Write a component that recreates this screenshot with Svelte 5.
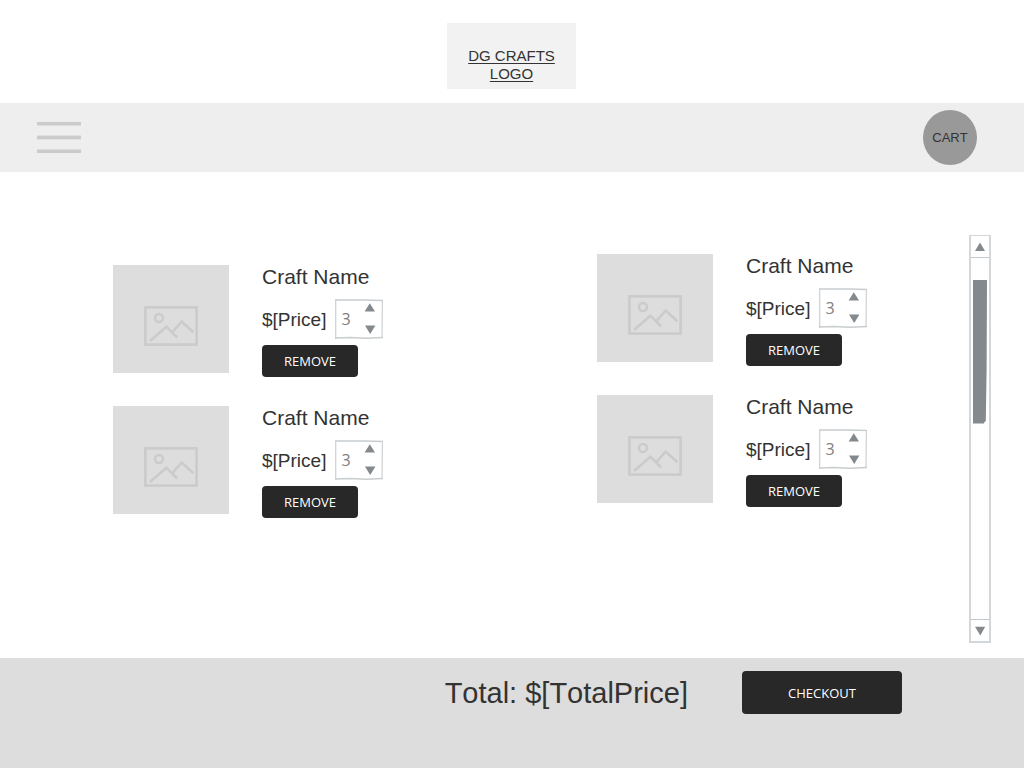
<script>
  let columns = $state([
    [{ id: 'a1', qty: 3 }, { id: 'a2', qty: 3 }],
    [{ id: 'b1', qty: 3 }, { id: 'b2', qty: 3 }],
  ]);

  function remove(col, id) {
    columns[col] = columns[col].filter((item) => item.id !== id);
  }
</script>

<div class="page">
  <header>
    <a class="logo" href="#home">DG CRAFTS LOGO</a>
  </header>

  <nav>
    <button class="menu" aria-label="Menu">
      <svg width="44" height="32" viewBox="0 0 44 32" fill="#cbcbcb">
        <rect y="0" width="44" height="3.5" />
        <rect y="13.6" width="44" height="3.8" />
        <rect y="27.5" width="44" height="3.5" />
      </svg>
    </button>
    <a class="cart" href="#cart">CART</a>
  </nav>

  <main>
    <div class="columns">
      {#each columns as items, c}
        <div class="column">
          {#each items as item (item.id)}
            <article>
              <div class="photo">
                <svg width="54" height="40" viewBox="0 0 54 40" fill="none" stroke="#cbcbcb" stroke-width="2.6">
                  <rect x="1.4" y="1.4" width="51.2" height="37.2" />
                  <circle cx="15" cy="12" r="4" stroke-width="2.4" />
                  <path d="M6 35 22.3 20.7 33.2 31.5M28.2 26.3 37.7 15.5 49.4 26.3" />
                </svg>
              </div>
              <div class="info">
                <h2>Craft Name</h2>
                <div class="row">
                  <span class="price">$[Price]</span>
                  <div class="stepper">
                    <svg class="frame" width="48" height="40" viewBox="0 0 48 40" fill="none">
                      <path d="M0 1 H30 L48 1.4" stroke="#c9cdcf" stroke-width="1.5" />
                      <path d="M.7 0V40" stroke="#ced3d6" stroke-width="1.3" />
                      <path d="M47.4 1 47 39" stroke="#cdd1d3" stroke-width="1.2" />
                      <path d="M0 39 15 38.6 31 39.2 48 38.6" stroke="#c9cdcf" stroke-width="1.5" />
                    </svg>
                    <input type="number" min="1" aria-label="Quantity" bind:value={item.qty} />
                    <div class="arrows">
                      <button aria-label="Increase quantity" onclick={() => item.qty++}>
                        <svg width="12" height="10" viewBox="0 0 12 10"><path d="M5.8 .2 11 8.6H.6Z" fill="#83898d" /></svg>
                      </button>
                      <button aria-label="Decrease quantity" onclick={() => (item.qty = Math.max(1, item.qty - 1))}>
                        <svg width="12" height="10" viewBox="0 0 12 10"><path d="M1 .6H11.4L6.2 9Z" fill="#83898d" /></svg>
                      </button>
                    </div>
                  </div>
                </div>
                <button class="dark remove" onclick={() => remove(c, item.id)}>REMOVE</button>
              </div>
            </article>
          {/each}
        </div>
      {/each}
    </div>

    <div class="scroller">
      <button aria-label="Scroll up">
        <svg width="12" height="10" viewBox="0 0 12 10"><path d="M6 .5 11 9H1Z" fill="#83898d" /></svg>
      </button>
      <div class="track">
        <svg class="thumb" viewBox="0 0 14 144" preserveAspectRatio="none">
          <path d="M0 0H14L13.6 90 12.8 141 11.5 142 11 143.5H0Z" fill="#83898d" />
        </svg>
      </div>
      <button aria-label="Scroll down">
        <svg width="12" height="10" viewBox="0 0 12 10"><path d="M1 .8H11.2L6.3 9.5Z" fill="#83898d" /></svg>
      </button>
    </div>
  </main>

  <footer>
    <p>Total: $[TotalPrice]</p>
    <button class="dark checkout">CHECKOUT</button>
  </footer>
</div>

<style>
  :global(body) {
    margin: 0;
    background: #fff;
  }
  .page {
    min-height: 100vh;
    display: flex;
    flex-direction: column;
    font-family: "Liberation Sans", Arial, sans-serif;
    font-kerning: none;
    color: #333;
  }
  .page :is(header, nav, main, footer, div, a, button, input) {
    box-sizing: border-box;
  }
  svg {
    display: block;
  }
  button {
    margin: 0;
    padding: 0;
    border: 0;
    background: none;
    cursor: pointer;
  }
  header {
    display: flex;
    justify-content: center;
    padding: 23px 1px 14px 0;
  }
  .logo {
    width: 129px;
    padding: 24px 16px 6px;
    background: #f2f2f2;
    color: #333;
    font-size: 15px;
    line-height: 18px;
    text-align: center;
    text-underline-offset: 2px;
  }
  nav {
    display: flex;
    align-items: center;
    justify-content: space-between;
    padding: 7px 47px 7px 37px;
    background: #eee;
  }
  .cart {
    display: flex;
    align-items: center;
    justify-content: center;
    width: 54px;
    height: 55px;
    border-radius: 50%;
    background: #999;
    color: #333;
    font-size: 13px;
    text-decoration: none;
  }
  main {
    flex: 1;
    display: flex;
    padding: 63px 33px 15px 113px;
  }
  .columns {
    flex: 1;
    display: grid;
    grid-template-columns: 1fr 1fr;
    column-gap: 112px;
  }
  .column {
    display: flex;
    flex-direction: column;
    gap: 29px;
    padding-top: 30px;
  }
  .column:nth-child(2) {
    padding-top: 19px;
  }
  article {
    display: flex;
    align-items: flex-start;
    gap: 33px;
  }
  .photo {
    display: flex;
    justify-content: center;
    flex: none;
    width: 116px;
    height: 108px;
    padding-top: 41px;
    background: #ddd;
  }
  h2 {
    margin: 0 0 10px;
    font-size: 21px;
    font-weight: 400;
    line-height: 24px;
    white-space: nowrap;
  }
  .row {
    display: flex;
    align-items: center;
    gap: 9px;
    margin-bottom: 6px;
  }
  .price {
    padding-top: 2px;
    font-size: 19px;
    line-height: 24px;
  }
  .stepper {
    position: relative;
    display: flex;
    width: 48px;
    height: 40px;
  }
  .frame {
    position: absolute;
    inset: 0;
    pointer-events: none;
  }
  input {
    width: 29px;
    padding: 0 0 0 6px;
    border: 0;
    background: none;
    color: #808080;
    font: 16px "Open Sans", sans-serif;
    appearance: textfield;
  }
  input::-webkit-inner-spin-button {
    appearance: none;
    margin: 0;
  }
  .arrows {
    display: flex;
    flex-direction: column;
    justify-content: space-between;
    padding: 4px 0;
  }
  .dark {
    border-radius: 4px;
    background: #282828;
    color: #fff;
    font-family: "Open Sans", sans-serif;
    font-size: 13px;
  }
  .remove {
    display: block;
    width: 96px;
    height: 32px;
  }
  .scroller {
    display: flex;
    flex-direction: column;
    width: 22px;
    border: 2px solid #d3d7da;
    border-top-width: 1px;
  }
  .scroller button {
    display: flex;
    align-items: center;
    justify-content: center;
    height: 21px;
  }
  .track {
    flex: 1;
    padding: 22px 2px 0;
    border: solid #c4c8ca;
    border-width: 1px 0;
  }
  .thumb {
    width: 14px;
    height: 144px;
  }
  footer {
    display: flex;
    align-items: flex-start;
    justify-content: flex-end;
    gap: 54px;
    min-height: 110px;
    padding: 13px 122px 13px 32px;
    background: #ddd;
  }
  footer p {
    margin: 0;
    font-size: 29px;
    line-height: 45px;
  }
  .checkout {
    width: 160px;
    height: 43px;
  }
</style>
